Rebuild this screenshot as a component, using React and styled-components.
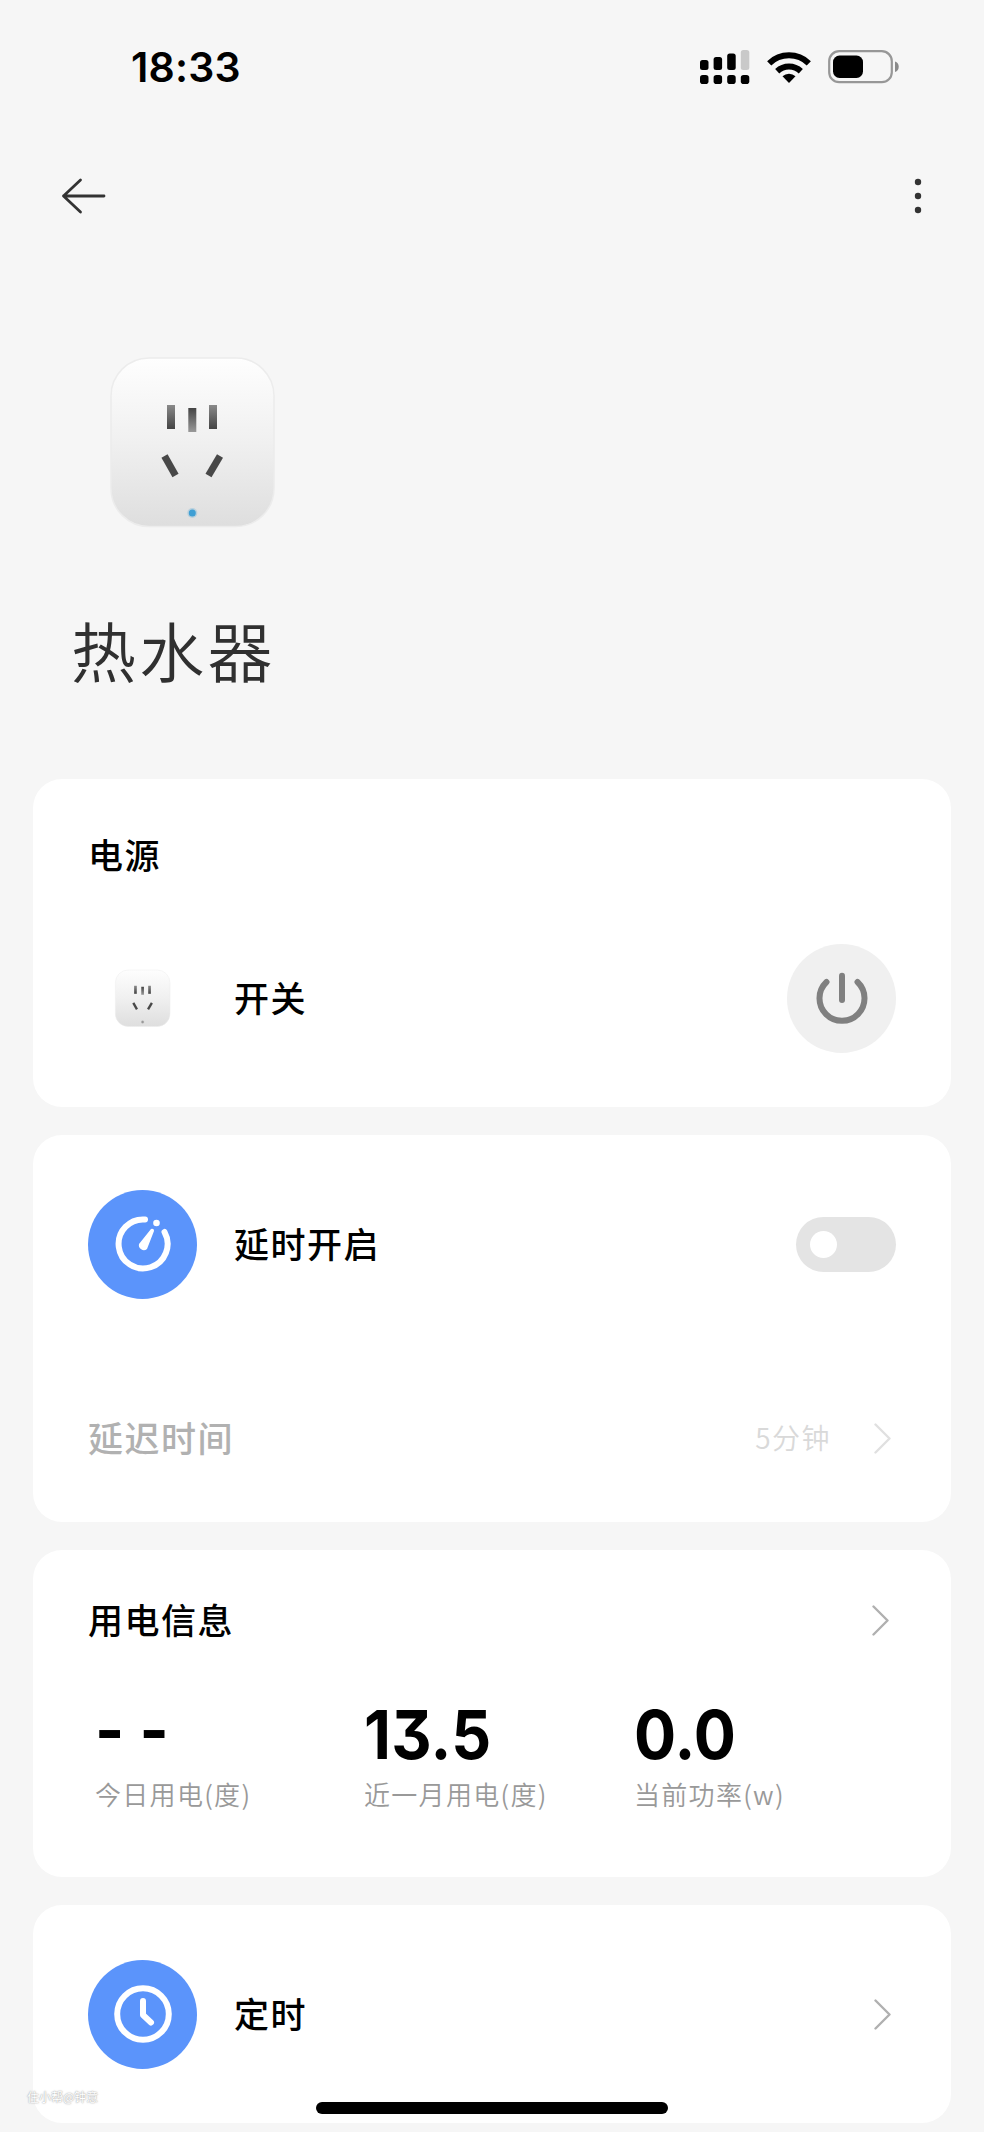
import { useState } from 'react';
import styled, { createGlobalStyle } from 'styled-components';

const GlobalStyle = createGlobalStyle`
*{
box-sizing:border-box;
}
body{
margin:0;
background-color:#f6f6f6;
font-family:"Noto Sans CJK SC",sans-serif;
}
`
const Page = styled.div`
position:relative;
width:984px;
height:2132px;
overflow:hidden;
background-color:#f6f6f6;
`
const StatusBar = styled.header`
height:132px;
padding:0 84px 0 131px;
display:flex;
justify-content:space-between;
align-items:center;
`
const Time = styled.div`
font-family:Inter,sans-serif;
font-size:41px;
font-weight:600;
line-height:50px;
letter-spacing:0.2px;
margin-top:1px;
color:#000;
`
const StatusIcons = styled.div`
display:flex;
align-items:center;
gap:17px;
margin-top:1px;
`
const NavBar = styled.nav`
height:128px;
padding:0 54px 0 60px;
display:flex;
justify-content:space-between;
align-items:center;
`
const IconButton = styled.button`
border:0;
padding:0;
background:none;
display:flex;
`
const Device = styled.section`
height:519px;
padding:95px 0 0 71px;
`
const DevicePicture = styled.div`
padding-left:36px;
height:175px;
`
const DeviceName = styled.h1`
margin:74px 0 0;
font-size:65px;
font-weight:350;
line-height:90px;
letter-spacing:3.2px;
color:#303030;
`
const CardList = styled.main`
display:flex;
flex-direction:column;
gap:28px;
padding:0 33px;
`
const Card = styled.section`
height:${props => props.$height}px;
padding:${props => props.$top}px 55px 0;
border-radius:29px;
background-color:#fff;
`
const Row = styled.div`
height:${props => props.$height || 110}px;
margin-top:${props => props.$gap || 0}px;
padding-right:${props => props.$inset || 0}px;
display:flex;
align-items:center;
`
const Label = styled.div`
flex:1;
padding-bottom:2px;
font-size:35px;
font-weight:500;
line-height:50px;
letter-spacing:1.5px;
color:${props => (props.$disabled ? '#b1b1b1' : '#000')};
`
const Round = styled.div`
width:109px;
height:109px;
padding:0;
border:0;
margin-right:${props => (props.$leading ? 37 : 0)}px;
border-radius:50%;
background-color:${props => props.$color || 'transparent'};
display:flex;
justify-content:center;
align-items:center;
`
const Switch = styled.button`
width:100px;
height:55px;
padding:0 14px;
border:0;
border-radius:28px;
background-color:${props => (props.$on ? '#5b94fb' : '#e4e4e4')};
display:flex;
align-items:center;
justify-content:${props => (props.$on ? 'flex-end' : 'flex-start')};
`
const Knob = styled.span`
width:27px;
height:27px;
border-radius:50%;
background-color:#fff;
`
const Value = styled.div`
padding-bottom:2px;
font-size:28px;
font-weight:350;
letter-spacing:1.5px;
margin-right:43px;
color:#d9d9d9;
`
const Stats = styled.div`
display:grid;
grid-template-columns:269px 270px 1fr;
padding-left:7px;
margin-top:48px;
`
const Figure = styled.div`
font-family:Inter,sans-serif;
font-size:68px;
font-weight:650;
line-height:82px;
letter-spacing:0.2px;
font-feature-settings:"cv09","case";
transform:scaleX(0.92);
transform-origin:left;
color:#000;
`
const Caption = styled.div`
font-size:26px;
font-weight:350;
line-height:38px;
letter-spacing:1.3px;
color:#999;
`
const HomeBar = styled.div`
position:absolute;
left:316px;
bottom:18px;
width:352px;
height:12px;
border-radius:6px;
background-color:#000;
`
const Watermark = styled.div`
position:absolute;
left:27px;
top:2087px;
font-size:12px;
line-height:20px;
color:#fff;
text-shadow:0 0 2px #aaa,0 0 1px #aaa;
`

const Signal = () => (
    <svg width="50" height="34" viewBox="0 0 50 34">
        <rect x="0" y="10" width="8.5" height="10" rx="2.5" />
        <rect x="13.6" y="7" width="8.5" height="13" rx="2.5" />
        <rect x="27.2" y="3.5" width="8.5" height="16.5" rx="2.5" />
        <rect x="40.8" y="0" width="8.5" height="20" rx="2.5" fill="#c9c9c9" />
        {[0, 13.6, 27.2, 40.8].map(x => (
            <rect key={x} x={x} y="25" width="8.5" height="9" rx="2.8" />
        ))}
    </svg>
)

const Wifi = () => (
    <svg width="44" height="32" viewBox="0 0 44 32">
        <g fill="none" stroke="#000" strokeWidth="6">
            <path d="M2.2 12.3a28.5 28.5 0 0 1 39.6 0" />
            <path d="M10.2 20.2a17.2 17.2 0 0 1 23.6 0" />
        </g>
        <path d="M15.5 25.3a9.6 9.6 0 0 1 13 0L22 32z" />
    </svg>
)

const Battery = () => (
    <svg width="72" height="34" viewBox="0 0 72 34">
        <rect x="1.2" y="1.2" width="62.6" height="31" rx="10" fill="none" stroke="#979797" strokeWidth="2.2" />
        <rect x="5" y="5.5" width="30" height="22.5" rx="6.5" />
        <path d="M67 11.5c5 1.5 5 9 0 10.500z" fill="#8a8a8a" />
    </svg>
)

const Socket = ({ width, id, led }) => (
    <svg width={width} height={width * 174 / 170} viewBox="0 0 170 174">
        <defs>
            <linearGradient id={id + 'body'} x1="0" y1="0" x2="0" y2="1">
                <stop offset="0" stopColor="#fefefe" />
                <stop offset="0.5" stopColor="#f0f0f0" />
                <stop offset="1" stopColor="#dedede" />
            </linearGradient>
            <linearGradient id={id + 'slot'} x1="0" y1="0" x2="0" y2="1">
                <stop offset="0" stopColor="#8a8a8a" />
                <stop offset="1" stopColor="#444" />
            </linearGradient>
            <linearGradient id={id + 'mid'} x1="0" y1="0" x2="0" y2="1">
                <stop offset="0" stopColor="#444" />
                <stop offset="1" stopColor="#999" />
            </linearGradient>
        </defs>
        <rect x="4" y="3" width="163" height="168.500" rx="38" fill={`url(#${id}body)`} stroke="#ececec" strokeWidth="1.5" />
        <rect x="60" y="50" width="8" height="24" fill={`url(#${id}slot)`} />
        <rect x="81.300" y="53" width="8" height="24" fill={`url(#${id}mid)`} />
        <rect x="102" y="50" width="8" height="24" fill={`url(#${id}slot)`} />
        <g stroke="#484848" strokeWidth="7">
            <path d="M57.500 101L68.500 120.500" />
            <path d="M113 101L101.500 120.500" />
        </g>
        <circle cx="85.300" cy="158" r="5" fill={led} opacity="0.25" />
        <circle cx="85.300" cy="158" r="3.500" fill={led} />
    </svg>
)

const Chevron = ({ color = '#b0b0b0' }) => (
    <svg width="17" height="31" viewBox="0 0 17 31">
        <path d="M1.500 1.500L15.500 15.500L1.500 29.500" fill="none" stroke={color} strokeWidth="2.4" strokeLinecap="round" strokeLinejoin="round" />
    </svg>
)

const stats = [
    { value: '- -', name: '今日用电(度)' },
    { value: '13.5', name: '近一月用电(度)' },
    { value: '0.0', name: '当前功率(w)' },
]

const App = () => {
    const [delay, setDelay] = useState(false)

    return <Page>
        <GlobalStyle />
        <StatusBar>
            <Time>18:33</Time>
            <StatusIcons>
                <Signal />
                <Wifi />
                <Battery />
            </StatusIcons>
        </StatusBar>
        <NavBar>
            <IconButton aria-label="返回">
                <svg width="46" height="38" viewBox="0 0 46 38" fill="none" stroke="#333" strokeWidth="2.8" strokeLinecap="round" strokeLinejoin="round">
                    <path d="M20.500 3L3.500 19L20.500 35M3.500 19H44" />
                </svg>
            </IconButton>
            <IconButton aria-label="更多">
                <svg width="24" height="38" viewBox="0 0 24 38" fill="#333">
                    <circle cx="12" cy="5" r="3.200" />
                    <circle cx="12" cy="19" r="3.200" />
                    <circle cx="12" cy="33" r="3.200" />
                </svg>
            </IconButton>
        </NavBar>
        <Device>
            <DevicePicture><Socket width={170} id="big" led="#3f9fd4" /></DevicePicture>
            <DeviceName>热水器</DeviceName>
        </Device>
        <CardList>
            <Card $height={328} $top={50}>
                <Label>电源</Label>
                <Row $gap={62}>
                    <Round $leading><Socket width={57} id="small" led="#999" /></Round>
                    <Label>开关</Label>
                    <Round as="button" $color="#f0f0f0">
                        <svg width="54" height="54" viewBox="0 0 54 54" fill="none" stroke="#808080" strokeWidth="6" strokeLinecap="round">
                            <path d="M27 4.700V29" />
                            <path d="M11.500 11A22.500 22.500 0 1 0 42.500 11" />
                        </svg>
                    </Round>
                </Row>
            </Card>
            <Card $height={387} $top={54}>
                <Row>
                    <Round $leading $color="#5b94fb">
                        <svg width="58" height="58" viewBox="0 0 58 58" fill="none" stroke="#fff" strokeWidth="6" strokeLinecap="round">
                            <path d="M31 4.500A24.500 24.500 0 1 0 50.500 17" />
                            <circle cx="42.500" cy="8" r="3.300" fill="#fff" stroke="none" />
                            <path d="M37 14L25 29A5 5 0 0 0 33 34L40 16A2 2 0 0 0 37 14Z" fill="#fff" stroke="none" />
                        </svg>
                    </Round>
                    <Label>延时开启</Label>
                    <Switch $on={delay} onClick={() => setDelay(!delay)}><Knob /></Switch>
                </Row>
                <Row $gap={84} $inset={5}>
                    <Label $disabled>延迟时间</Label>
                    <Value>5分钟</Value>
                    <Chevron color="#e0e0e0" />
                </Row>
            </Card>
            <Card $height={327} $top={45}>
                <Row $height={50} $inset={7}>
                    <Label>用电信息</Label>
                    <Chevron />
                </Row>
                <Stats>
                    {stats.map(item => (
                        <div key={item.name}>
                            <Figure>{item.value}</Figure>
                            <Caption>{item.name}</Caption>
                        </div>
                    ))}
                </Stats>
            </Card>
            <Card $height={218} $top={54}>
                <Row $inset={5}>
                    <Round $leading $color="#5b94fb">
                        <svg width="58" height="58" viewBox="0 0 58 58" fill="none" stroke="#fff" strokeWidth="6" strokeLinecap="round" strokeLinejoin="round">
                            <circle cx="29" cy="29" r="25.800" />
                            <path d="M29 16V30L37 37.500" />
                        </svg>
                    </Round>
                    <Label>定时</Label>
                    <Chevron />
                </Row>
            </Card>
        </CardList>
        <Watermark>住小帮@钟意</Watermark>
        <HomeBar />
    </Page>
}

export default App;
